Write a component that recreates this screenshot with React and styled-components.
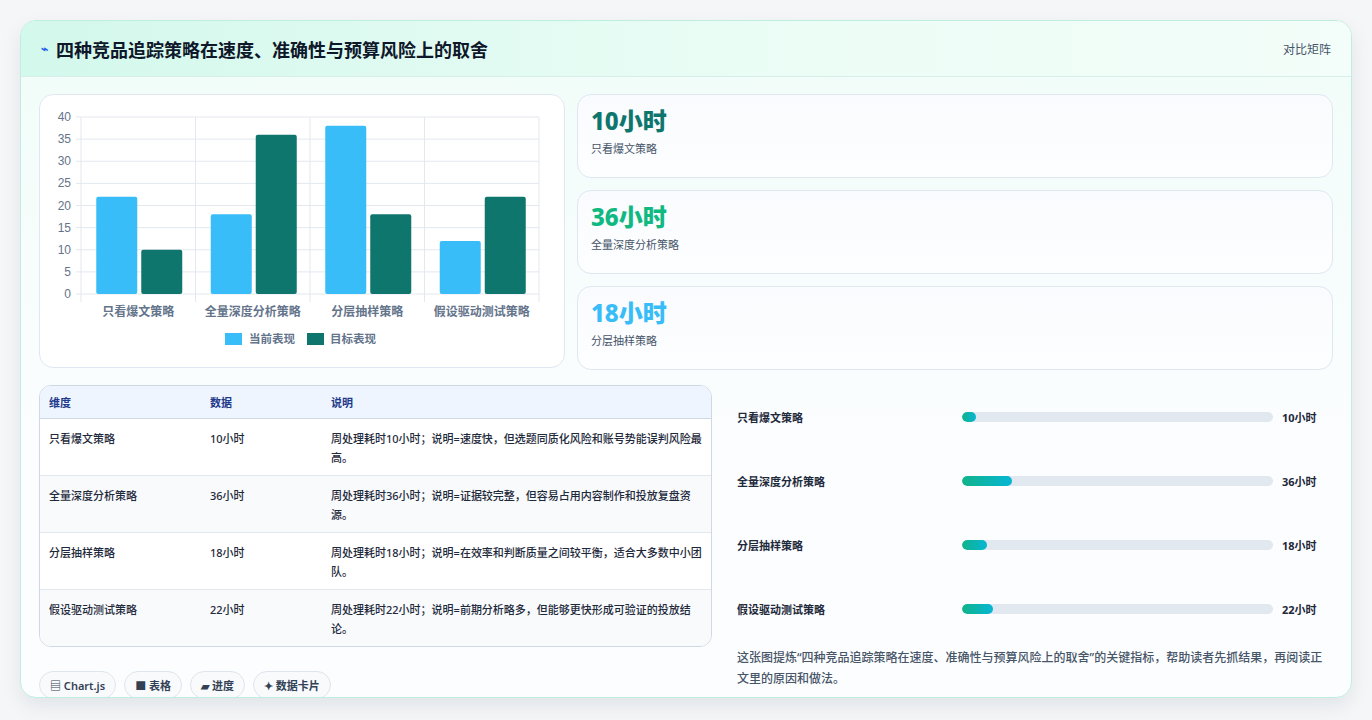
import React from "react";
import styled, { createGlobalStyle } from "styled-components";

const G = createGlobalStyle`
  body{margin:0;background:#f4f6f8;font-family:"Noto Sans","Noto Sans CJK SC",sans-serif;}
  *{box-sizing:border-box;}
`;
const Page = styled.div`padding:20px 20px 22px 20px;height:720px;`;
const Card = styled.div`
  width:1332px;height:678px;border:1px solid #bfeee0;border-radius:16px;overflow:hidden;
  background:linear-gradient(180deg,#f0fdf9 0%,#fbfdfe 60%,#fcfdfe 100%);
  box-shadow:0 8px 20px rgba(15,23,42,.08);
`;
const Header = styled.div`
  height:56px;display:flex;align-items:center;justify-content:space-between;padding:0 20px;
  background:linear-gradient(90deg,#d3f8ec,#ecfdf6 60%,#f3fdf9);border-bottom:1px solid #d6efe9;
`;
const Title = styled.h1`margin:0;font-size:18px;font-weight:700;color:#0f172a;display:flex;align-items:center;gap:8px;`;
const Tag = styled.span`font-size:12px;color:#475569;`;
const Body = styled.div`padding:17px 18px 0 18px;display:flex;flex-direction:column;gap:15px;`;
const Top = styled.div`display:grid;grid-template-columns:526px 1fr;gap:12px;`;
const Panel = styled.div`background:#fff;border:1px solid #dfe7f1;border-radius:14px;`;
const ChartBox = styled(Panel)`height:274px;padding:0;`;
const Stats = styled.div`display:flex;flex-direction:column;gap:12px;`;
const Stat = styled(Panel)`height:84px;padding:10px 13px;background:linear-gradient(180deg,#f9fbfe,#fdfeff);`;
const Num = styled.div`font-size:24px;font-weight:800;color:${p=>p.c};line-height:32px;`;
const Lbl = styled.div`font-size:11px;color:#475569;margin-top:3px;`;
const Bottom = styled.div`display:grid;grid-template-columns:673px 1fr;gap:12px;`;
const Left = styled.div`display:flex;flex-direction:column;gap:24px;`;
const Table = styled.table`width:100%;border-collapse:separate;border-spacing:0;border:1px solid #cfd9e6;border-radius:12px;overflow:hidden;font-size:11px;color:#1e293b;background:#fff;
  th{background:#eef5ff;color:#1e3a8a;font-weight:600;text-align:left;height:33px;padding:0 9px;border-bottom:1px solid #cfd9e6;}
  td{vertical-align:top;padding:10px 9px 8px;line-height:19px;height:53px;border-bottom:1px solid #e2e8f0;font-weight:500;}
  tr:nth-child(even) td{background:#f8fafc;}
  tr:last-child td{border-bottom:none;}
`;
const Chips = styled.div`display:flex;gap:8px;`;
const Chip = styled.span`height:28px;padding:0 10px;border:1px solid #dde5ee;border-radius:14px;background:#f8fafc;font-size:11px;font-weight:600;color:#334155;display:flex;align-items:center;gap:3px;`;
const Right = styled.div`display:flex;flex-direction:column;padding:0 0 0 1px;`;
const Row = styled.div`height:64px;display:grid;grid-template-columns:225px 311px 1fr;align-items:center;padding:0 0 0 12px;gap:0;font-size:11px;font-weight:600;color:#1e293b;`;
const Track = styled.div`height:10px;border-radius:5px;background:#e2e8f0;overflow:hidden;`;
const Fill = styled.div`height:100%;border-radius:5px;background:linear-gradient(90deg,#10b38a,#06b6d4);`;
const Val = styled.span`padding-left:9px;font-weight:700;`;
const Note = styled.p`margin:6px 0 0 12px;font-size:12px;line-height:21px;color:#475569;font-weight:500;`;

const cats=["只看爆文策略","全量深度分析策略","分层抽样策略","假设驱动测试策略"];
const cur=[22,18,38,12], tgt=[10,36,18,22];
function Chart(){
  const x0=41,x1=499,y0=199,yT=22,k=(y0-yT)/40,w=(x1-x0)/4;
  return <svg width="524" height="272" style={{display:"block"}} fontFamily="Liberation Sans, Noto Sans CJK SC, sans-serif">
    {[0,5,10,15,20,25,30,35,40].map(v=>{const y=y0-v*k;return <g key={v}>
      <line x1={x0-5} x2={x1} y1={y} y2={y} stroke="#e3e7ef"/>
      <text x={x0-10} y={y+4} textAnchor="end" fontSize="12" fill="#64748b">{v}</text></g>})}
    {[0,1,2,3,4].map(i=><line key={i} x1={x0+i*w} x2={x0+i*w} y1={yT} y2={y0+8} stroke="#e3e7ef"/>)}
    {cats.map((c,i)=>{const cx=x0+i*w+w/2;return <g key={c}>
      <rect x={cx-42} y={y0-cur[i]*k} width="41" height={cur[i]*k} rx="2" fill="#38bdf8"/>
      <rect x={cx+3} y={y0-tgt[i]*k} width="41" height={tgt[i]*k} rx="2" fill="#0f766e"/>
      <text x={cx} y={y0+22} textAnchor="middle" fontSize="12" fill="#64748b" fontWeight="600">{c}</text></g>})}
    <rect x="185" y="238" width="17" height="12" fill="#38bdf8"/>
    <text x="209" y="248" fontSize="11.5" fill="#64748b" fontWeight="600">当前表现</text>
    <rect x="267" y="238" width="17" height="12" fill="#0f766e"/>
    <text x="290" y="248" fontSize="11.5" fill="#64748b" fontWeight="600">目标表现</text>
  </svg>;
}

const rows=[["只看爆文策略","10小时","周处理耗时10小时；说明=速度快，但选题同质化风险和账号势能误判风险最高。"],
["全量深度分析策略","36小时","周处理耗时36小时；说明=证据较完整，但容易占用内容制作和投放复盘资源。"],
["分层抽样策略","18小时","周处理耗时18小时；说明=在效率和判断质量之间较平衡，适合大多数中小团队。"],
["假设驱动测试策略","22小时","周处理耗时22小时；说明=前期分析略多，但能够更快形成可验证的投放结论。"]];
const prog=[["只看爆文策略",4.5,"10小时"],["全量深度分析策略",16,"36小时"],["分层抽样策略",8,"18小时"],["假设驱动测试策略",10,"22小时"]];

export default function App(){
  return <Page><G/><Card>
    <Header><Title><span style={{color:"#2563eb",fontSize:12}}>⌁</span>四种竞品追踪策略在速度、准确性与预算风险上的取舍</Title><Tag>对比矩阵</Tag></Header>
    <Body>
      <Top>
        <ChartBox><Chart/></ChartBox>
        <Stats>
          <Stat><Num c="#0f766e">10小时</Num><Lbl>只看爆文策略</Lbl></Stat>
          <Stat><Num c="#10b981">36小时</Num><Lbl>全量深度分析策略</Lbl></Stat>
          <Stat><Num c="#38bdf8">18小时</Num><Lbl>分层抽样策略</Lbl></Stat>
        </Stats>
      </Top>
      <Bottom>
        <Left>
          <Table><thead><tr><th style={{width:161}}>维度</th><th style={{width:121}}>数据</th><th>说明</th></tr></thead>
            <tbody>{rows.map(r=><tr key={r[0]}><td>{r[0]}</td><td>{r[1]}</td><td>{r[2]}</td></tr>)}</tbody></Table>
          <Chips><Chip>▤ Chart.js</Chip><Chip>■ 表格</Chip><Chip>▰ 进度</Chip><Chip>✦ 数据卡片</Chip></Chips>
        </Left>
        <Right>
          {prog.map(p=><Row key={p[0]}><span>{p[0]}</span><Track><Fill style={{width:p[1]+"%"}}/></Track><Val>{p[2]}</Val></Row>)}
          <Note>这张图提炼“四种竞品追踪策略在速度、准确性与预算风险上的取舍”的关键指标，帮助读者先抓结果，再阅读正文里的原因和做法。</Note>
        </Right>
      </Bottom>
    </Body>
  </Card></Page>;
}
